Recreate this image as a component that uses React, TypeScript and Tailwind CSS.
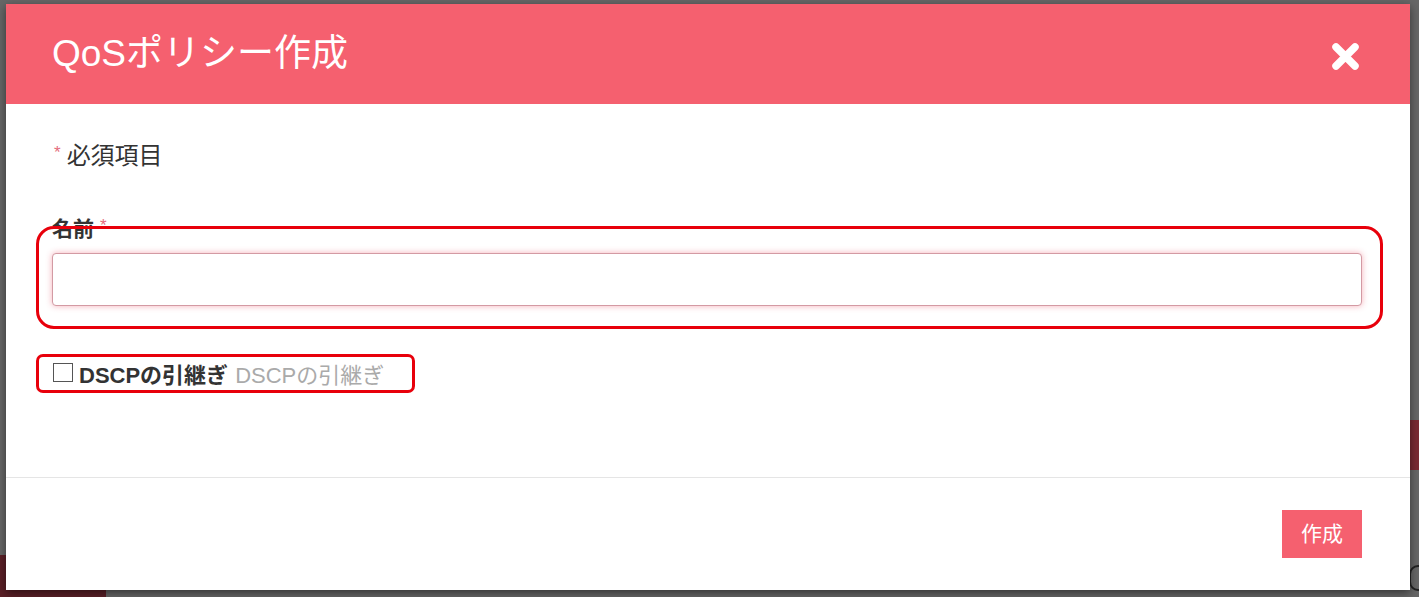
import React from "react";

const font = { fontFamily: '"Liberation Sans", "Noto Sans CJK JP", sans-serif' };

export default function App() {
  return (
    <div
      className="relative w-[1419px] h-[597px] overflow-hidden bg-[#676767]"
      style={font}
    >
      {/* faint page content behind the overlay */}
      <div className="absolute right-0 top-[420px] w-[9px] h-[50px] bg-[#7a2a33]" />
      <div className="absolute left-0 top-[555px] w-[106px] h-[42px] bg-[#5b2027]" />
      <div className="absolute right-[-8px] top-[565px] w-[18px] h-[26px] rounded-full border-2 border-[#222]" />

      <div className="relative ml-[6px] mt-[4px] w-[1404px] h-[586px] bg-white flex flex-col shadow-[0_3px_9px_rgba(0,0,0,0.5)]">
        {/* header */}
        <div className="h-[100px] bg-[#f5606f] flex items-center justify-between pl-[46px] pr-[50px]">
          <h1 className="text-[37px] leading-none text-white font-normal mt-[-2px]">
            QoSポリシー作成
          </h1>
          <svg width="29" height="29" viewBox="0 0 29 29" className="mt-[4px]">
            <path
              d="M5 5 L24 24 M24 5 L5 24"
              stroke="#fff"
              strokeWidth="7.5"
              strokeLinecap="round"
            />
          </svg>
        </div>

        {/* body */}
        <div className="flex-1 pl-[46px] pr-[47px] pt-[37px]">
          <div className="text-[24px] leading-[30px] text-[#333] flex items-center">
            <span className="text-[#e46d7d] text-[17px] mr-[6px] ml-[2px] mt-[-6px]">*</span>
            必須項目
          </div>

          <div className="relative mt-[44px]">
            <div className="absolute left-[-16px] right-[-20px] top-[11px] h-[103px] rounded-[18px] border-[3px] border-[#e8000b] pointer-events-none z-10" />
            <div className="text-[21px] leading-[28px] font-bold text-[#333] flex items-center">
              名前
              <span className="text-[#e46d7d] font-normal text-[17px] ml-[6px] mt-[-6px]">*</span>
            </div>
            <div className="mt-[10px] h-[53px] rounded-[4px] border border-[#d39aa3] bg-white shadow-[0_0_6px_rgba(232,80,100,0.45)] mr-[1px]" />
          </div>

          <div className="relative mt-[54px] flex items-center h-[30px]">
            <div className="absolute left-[-16px] w-[379px] top-[-6px] h-[39px] rounded-[7px] border-[3px] border-[#e8000b] pointer-events-none" />
            <div className="w-[20px] h-[19px] border border-[#555] bg-white ml-[1px] mr-[6px] mt-[-6px]" />
            <span className="text-[22px] font-bold text-[#333]">DSCPの引継ぎ</span>
            <span className="text-[22px] text-[#aaa] ml-[7px]">DSCPの引継ぎ</span>
          </div>
        </div>

        {/* footer */}
        <div className="h-[113px] border-t border-[#e5e5e5] flex justify-end pr-[48px] pt-[32px]">
          <button className="w-[80px] h-[48px] bg-[#f5606f] text-white text-[21px]">作成</button>
        </div>
      </div>
    </div>
  );
}
